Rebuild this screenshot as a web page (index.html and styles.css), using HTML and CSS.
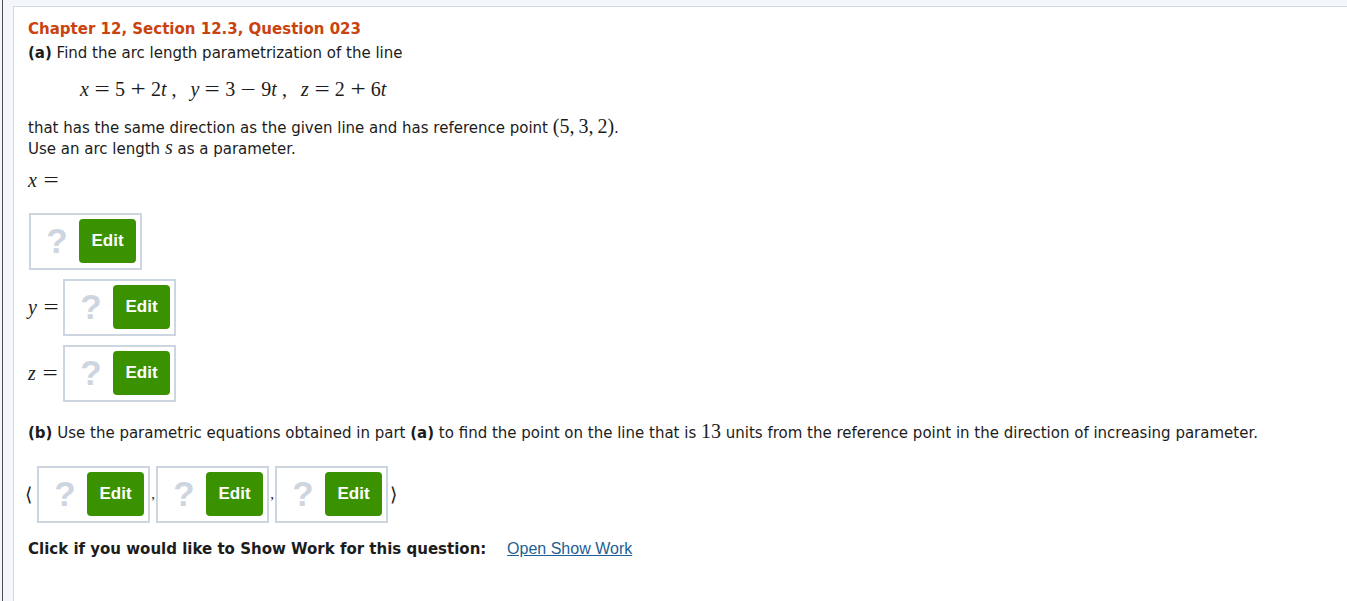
FILE: index.html
```html
<!DOCTYPE html>
<html lang="en">
<head>
    <meta charset="UTF-8">
    <title>Chapter 12, Section 12.3, Question 023</title>
    <link rel="stylesheet" href="styles.css">
</head>
<body>
    <div class="frame">
        <div class="question">
            <div class="title">Chapter 12, Section 12.3, Question 023</div>
            <div class="part"><b>(a)</b> Find the arc length parametrization of the line</div>

            <div class="equation">
                <span class="mi">x</span><span class="mo">=</span>5<span class="mo">+</span>2<span class="mi">t</span> ,<span class="gap"></span><span class="mi">y</span><span class="mo">=</span>3<span class="mo">&minus;</span>9<span class="mi">t</span> ,<span class="gap"></span><span class="mi">z</span><span class="mo">=</span>2<span class="mo">+</span>6<span class="mi">t</span>
            </div>

            <p class="text">that has the same direction as the given line and has reference point <span class="math">(5,&thinsp;3,&thinsp;2)</span>.<br>
            Use an arc length <span class="mi math">s</span> as a parameter.</p>

            <div class="var-label"><span class="mi">x</span><span class="mo">=</span></div>
            <div class="answer-row first">
                <div class="answer-box"><span class="qmark">?</span><button class="edit">Edit</button></div>
            </div>

            <div class="answer-row">
                <span class="var"><span class="mi">y</span><span class="mo">=</span></span>
                <div class="answer-box"><span class="qmark">?</span><button class="edit">Edit</button></div>
            </div>

            <div class="answer-row">
                <span class="var"><span class="mi">z</span><span class="mo">=</span></span>
                <div class="answer-box"><span class="qmark">?</span><button class="edit">Edit</button></div>
            </div>

            <div class="part part-b"><b>(b)</b> Use the parametric equations obtained in part <b>(a)</b> to find the point on the line that is <span class="math">13</span> units from the reference point in the direction of increasing parameter.</div>

            <div class="point-row">
                <span class="angle">&#10216;</span>
                <div class="answer-box"><span class="qmark">?</span><button class="edit">Edit</button></div>
                <span class="comma">,</span>
                <div class="answer-box"><span class="qmark">?</span><button class="edit">Edit</button></div>
                <span class="comma">,</span>
                <div class="answer-box"><span class="qmark">?</span><button class="edit">Edit</button></div>
                <span class="angle">&#10217;</span>
            </div>

            <div class="show-work">
                <b>Click if you would like to Show Work for this question:</b>
                <a href="#" class="show-link">Open Show Work</a>
            </div>
        </div>
    </div>
</body>
</html>
```

FILE: styles.css
```css
:root {
    --title-color: #c8430f;
    --text-color: #1c1c1c;
    --box-border: #cdd5e0;
    --edit-green: #3a9200;
    --page-bg: #f3f6fa;
}
html, body {
    margin: 0;
    height: 100%;
}
body {
    background-color: var(--page-bg);
    font-family: "DejaVu Sans", Verdana, sans-serif;
    font-size: 15px;
    color: var(--text-color);
    overflow: hidden;
}
.frame {
    height: 100%;
    margin-left: 2px;
    border-left: 1px solid #4d4d4d;
    padding: 6px 0 0 10px;
    box-sizing: border-box;
}
.question {
    height: 100%;
    background-color: #ffffff;
    border-top: 1px solid #d2d9e3;
    border-left: 1px solid #d2d9e3;
    padding: 12px 0 0 14px;
    box-sizing: border-box;
}
.title {
    font-weight: bold;
    color: var(--title-color);
    line-height: 20px;
}
.part {
    line-height: 20px;
    margin-top: 4px;
}
.mi {
    font-family: "Liberation Serif", "Times New Roman", serif;
    font-style: italic;
}
.mo {
    display: inline-block;
    width: 16px;
    margin: 0 5px;
    text-align: center;
    transform: scaleX(1.35);
}
.math {
    font-family: "Liberation Serif", "Times New Roman", serif;
    font-size: 20px;
    line-height: 0;
}
.equation {
    font-family: "Liberation Serif", "Times New Roman", serif;
    font-size: 20px;
    margin: 15px 0 0 52px;
    line-height: 22px;
}
.equation .gap {
    display: inline-block;
    width: 14px;
}
.text {
    margin: 18px 0 0;
    line-height: 21px;
}
.var-label, .var {
    font-family: "Liberation Serif", "Times New Roman", serif;
    font-size: 20px;
    white-space: nowrap;
}
.var-label .mo, .var .mo {
    margin-left: 6px;
    margin-right: 0;
}
.var-label {
    margin-top: 9px;
    line-height: 22px;
}
.answer-row {
    display: flex;
    align-items: center;
    gap: 5px;
    margin-top: 9px;
}
.answer-row.first {
    margin-top: 22px;
    margin-left: 1px;
}
.var {
    width: 30px;
    flex-shrink: 0;
}
.answer-box {
    display: flex;
    align-items: center;
    border: 2px solid var(--box-border);
    padding: 4px 4px 5px 4px;
    background-color: #ffffff;
}
.qmark {
    width: 44px;
    text-align: center;
    font-family: "Liberation Sans", Arial, sans-serif;
    font-weight: bold;
    font-size: 35px;
    color: var(--box-border);
    line-height: 44px;
}
.edit {
    width: 57px;
    height: 44px;
    border: none;
    border-radius: 4px;
    background-color: var(--edit-green);
    color: #ffffff;
    font-family: "Liberation Sans", Arial, sans-serif;
    font-weight: bold;
    font-size: 17px;
    padding: 0;
    cursor: pointer;
}
.part-b {
    margin-top: 21px;
}
.point-row {
    display: flex;
    align-items: center;
    margin-top: 23px;
}
.angle {
    font-family: "Liberation Serif", "Times New Roman", serif;
    font-size: 19px;
    width: 9px;
}
.angle:first-child {
    width: 12px;
    margin-left: -3px;
}
.angle:last-child {
    margin-left: 2px;
}
.comma {
    font-family: "Liberation Serif", "Times New Roman", serif;
    font-size: 15px;
    width: 6px;
    text-align: center;
}
.show-work {
    margin-top: 16px;
    line-height: 20px;
}
.show-link {
    margin-left: 16px;
    color: #1d5f94;
    font-family: "Liberation Sans", Arial, sans-serif;
    font-size: 16px;
}
```
